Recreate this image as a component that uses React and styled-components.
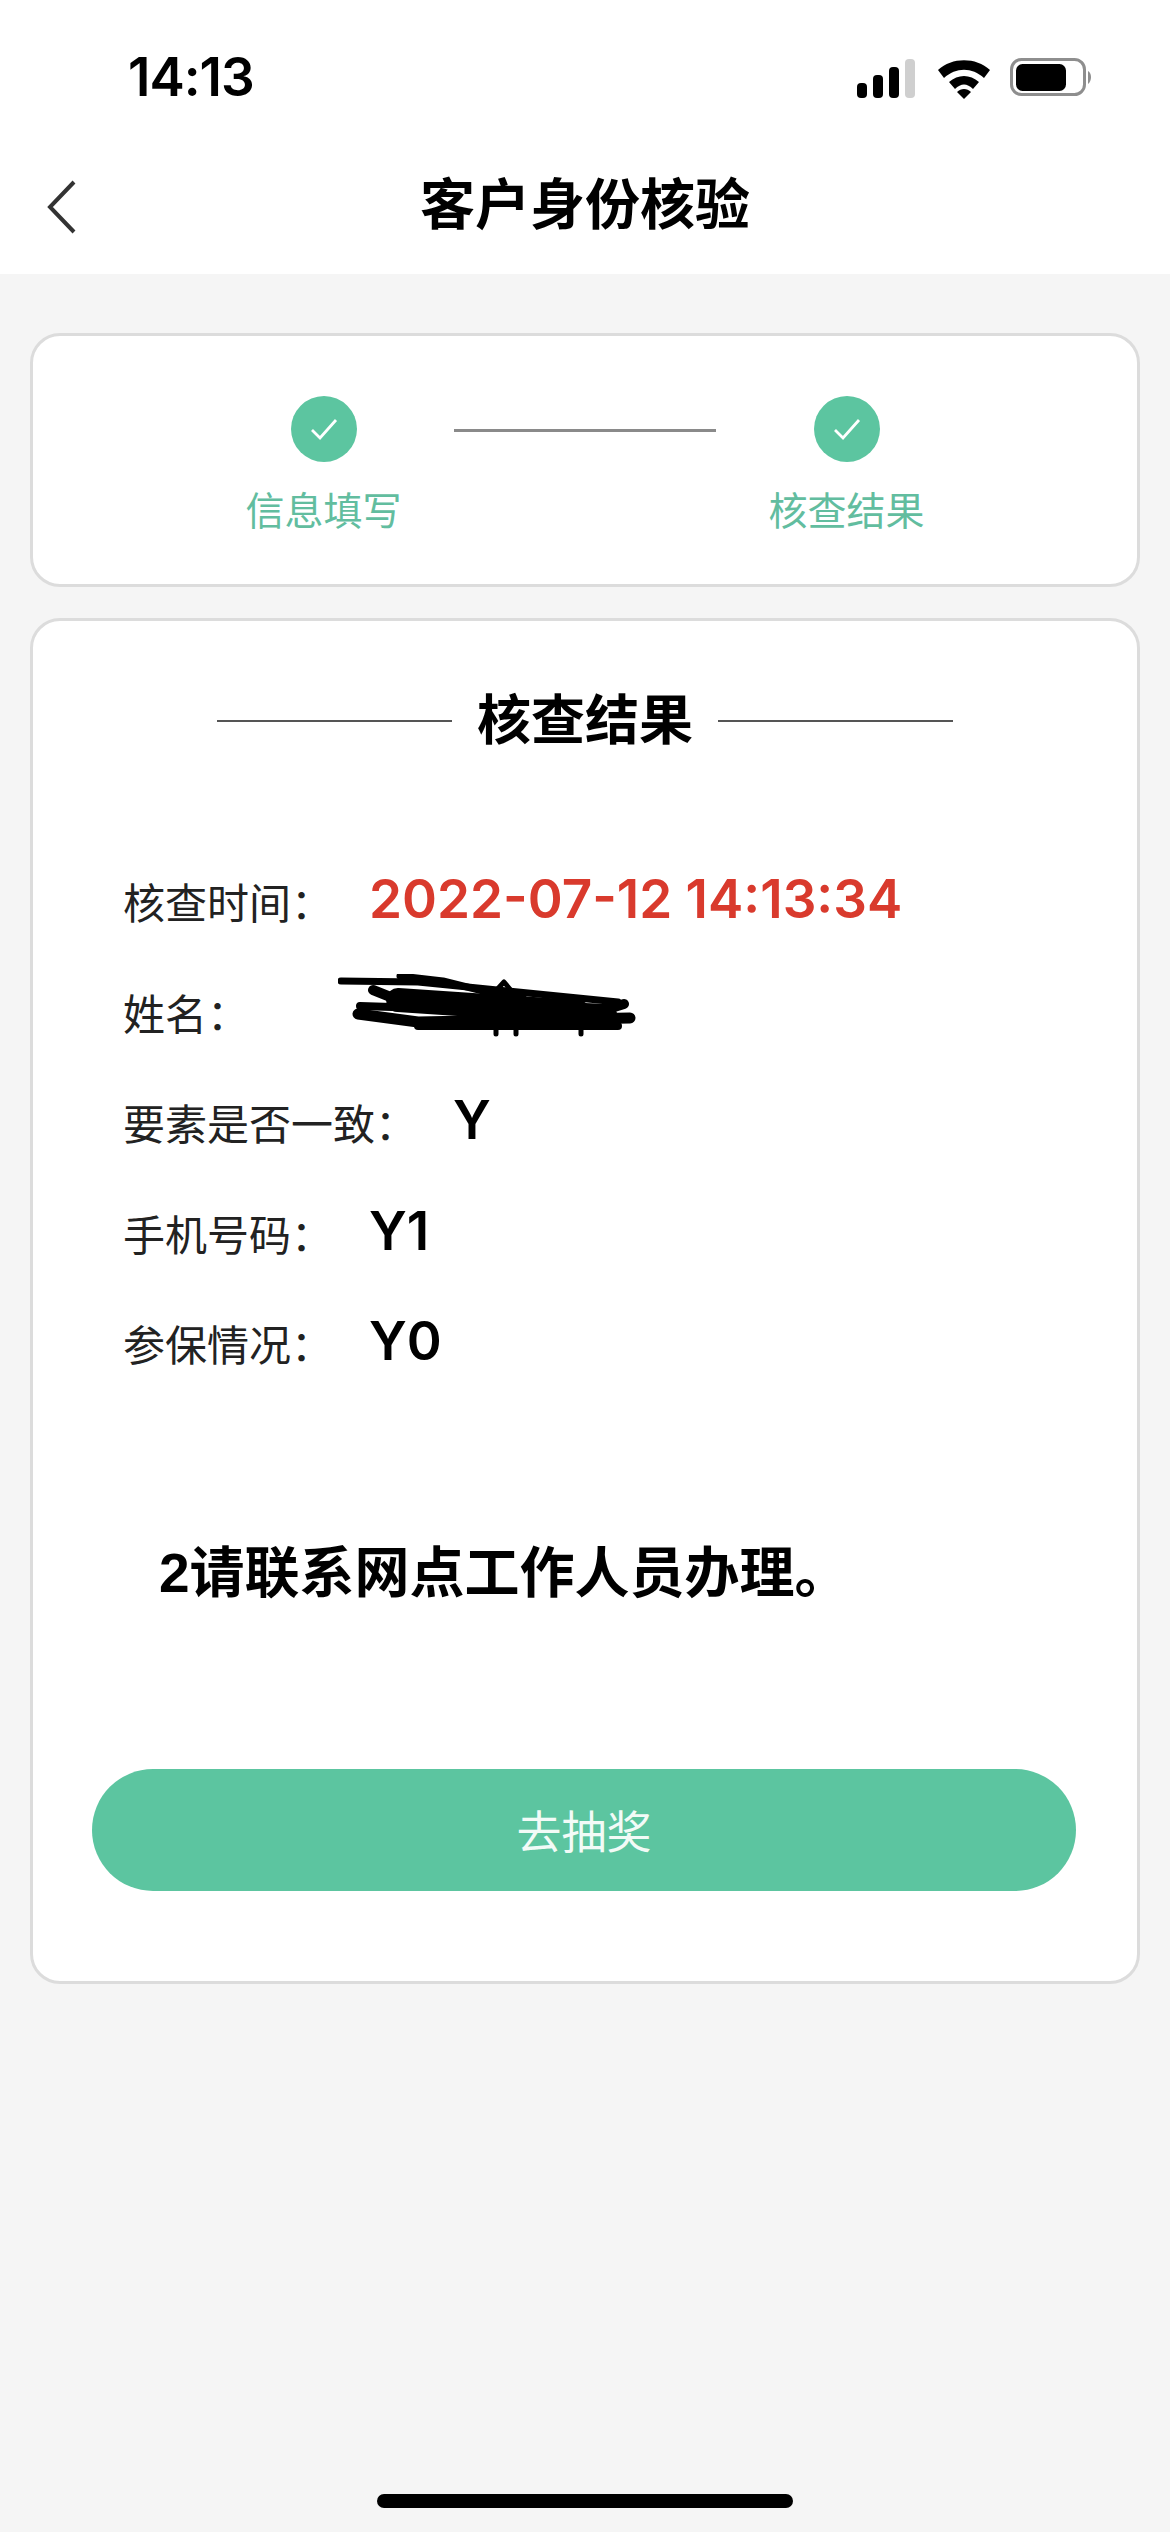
import React from 'react';
import styled, { createGlobalStyle } from 'styled-components';

const Global = createGlobalStyle`
  html, body { margin: 0; padding: 0; background: #f5f5f5; }
  * { box-sizing: border-box; }
`;
const FONT = `"Liberation Sans", "Noto Sans CJK SC", sans-serif`;
const GREEN = '#5cc5a0';

const Page = styled.div`
  width: 1170px; height: 2532px; background: #f5f5f5; font-family: ${FONT};
  color: #000; display: flex; flex-direction: column; overflow: hidden;
`;
const Top = styled.header`background: #fff; height: 274px; display: flex; flex-direction: column;`;
const StatusBar = styled.div`
  height: 150px; padding: 48px 76px 0 128px; display: flex; justify-content: space-between; align-items: flex-start;
`;
const Clock = styled.span`font-family: Inter, sans-serif; font-weight: 600; font-size: 53px; line-height: 58px; letter-spacing: -1px; color: #000;`;
const StatusIcons = styled.svg`width: 240px; height: 50px; display: block; margin-top: 6px;`;
const NavBar = styled.div`flex: 1; position: relative; display: flex; align-items: center; justify-content: center; padding-bottom: 14px;`;
const BackIcon = styled.svg`position: absolute; left: 47px; top: 29px; width: 36px; height: 56px;`;
const Title = styled.h1`margin: 0; font-size: 55px; font-weight: 700; line-height: 72px; color: #000;`;

const Main = styled.main`padding: 59px 30px 0; display: flex; flex-direction: column; gap: 31px;`;
const Card = styled.section`background: #fff; border: 3px solid #dcdcdc; border-radius: 30px;`;
const StepsCard = styled(Card)`height: 254px; padding-top: 60px; display: flex; justify-content: center;`;
const Step = styled.div`width: 261px; display: flex; flex-direction: column; align-items: center; gap: 26px;`;
const StepDot = styled.div`width: 66px; height: 66px; border-radius: 50%; background: ${GREEN}; display: flex; align-items: center; justify-content: center;`;
const StepLabel = styled.span`font-size: 39px; line-height: 48px; color: #62bd9f; white-space: nowrap;`;
const StepLine = styled.div`width: 262px; height: 3px; background: #8a8a8a; margin: 33px 0 0;`;

const ResultCard = styled(Card)`height: 1366px; padding: 0 59px; display: flex; flex-direction: column;`;
const SectionHead = styled.div`display: flex; align-items: center; justify-content: center; gap: 25px; margin-top: 64px; height: 72px;`;
const HeadRule = styled.div`width: 235px; height: 2px; background: #555;`;
const HeadText = styled.h2`margin: 0; font-size: 54px; font-weight: 700; line-height: 72px; color: #000;`;
const Rows = styled.div`margin-top: 87px; padding-left: 31px; display: flex; flex-direction: column;`;
const Row = styled.div`height: 110.5px; display: flex; align-items: center;`;
const Label = styled.span`font-size: 42px; line-height: 60px; color: #222; margin-top: 12px; white-space: nowrap;`;
const Value = styled.span`
  font-family: Inter, "Noto Sans CJK SC", sans-serif; font-weight: 600;
  font-size: 53px; line-height: 60px; margin-left: 36px;
  color: ${p => (p.$red ? '#d93a2d' : '#000')}; white-space: nowrap;
`;
const Scribble = styled.svg`width: 300px; height: 70px; margin: 0 0 2px 89px; flex: none;`;
const Notice = styled.p`margin: 140px 0 0 67px; font-size: 55px; line-height: 72px; font-weight: 700; color: #000;`;
const Action = styled.button`
  margin: 160px 0 0 0; height: 122px; width: 984px; border: 0; border-radius: 61px; background: ${GREEN};
  color: #f2fbf7; font: 400 45px ${FONT};
`;
const HomeBar = styled.div`width: 416px; height: 14px; border-radius: 7px; background: #000; margin: auto auto 24px;`;

const Check = () => (
  <svg width="30" height="24" viewBox="0 0 30 24">
    <path d="M3 13 L11 21 L27 3" fill="none" stroke="#fff" strokeWidth="2.8" />
  </svg>
);

const Scrib = () => (
  <Scribble viewBox="0 0 300 70">
    <g fill="none" stroke="#000" strokeLinecap="round" strokeLinejoin="round">
      <path d="M3 7 L80 8 L180 18 L280 28" strokeWidth="7" />
      <path d="M62 2 L105 7 L145 17 L185 24" strokeWidth="7" />
      <path d="M35 16 L60 26 L270 35 L286 30" strokeWidth="10" />
      <path d="M22 32 L275 40" strokeWidth="8" />
      <path d="M20 40 L80 48 L292 44" strokeWidth="11" />
      <path d="M80 52 L280 52" strokeWidth="8" />
      <path d="M60 26 L240 38" strokeWidth="24" />
      <path d="M155 20 L166 8 L176 20" strokeWidth="5" />
      <path d="M158 50 L158 60 M178 50 L178 60 M243 50 L243 60" strokeWidth="5" />
    </g>
  </Scribble>
);

export default function App() {
  return (
    <Page>
      <Global />
      <Top>
        <StatusBar>
          <Clock>14:13</Clock>
          <StatusIcons viewBox="0 0 240 50">
            <g fill="#000">
              <rect x="3" y="29" width="10" height="15" rx="4" />
              <rect x="19" y="21" width="10" height="23" rx="4" />
              <rect x="35" y="13" width="10" height="31" rx="4" />
            </g>
            <rect x="51" y="5" width="10" height="39" rx="4" fill="#cfcfcf" />
            <path d="M84 16 C98 3 122 3 136 16 L130 24 C118 13 102 13 90 24 Z" fill="#000" />
            <path d="M95 28 C104 20 116 20 125 28 L119 35 C113 29 107 29 101 35 Z" fill="#000" />
            <path d="M103 38 C107 34 113 34 117 38 L110 45 Z" fill="#000" />
            <rect x="157.5" y="5.5" width="73" height="35" rx="10" fill="none" stroke="#8e8e8e" strokeWidth="3" />
            <rect x="162" y="10" width="50" height="27" rx="6.5" fill="#000" />
            <path d="M234 17 C238 19 238 27 234 30 Z" fill="#8e8e8e" />
          </StatusIcons>
        </StatusBar>
        <NavBar>
          <BackIcon viewBox="0 0 36 56">
            <path d="M27 3 L3 28 L27 53" fill="none" stroke="#333" strokeWidth="4" />
          </BackIcon>
          <Title>客户身份核验</Title>
        </NavBar>
      </Top>
      <Main>
        <StepsCard>
          <Step><StepDot><Check /></StepDot><StepLabel>信息填写</StepLabel></Step>
          <StepLine />
          <Step><StepDot><Check /></StepDot><StepLabel>核查结果</StepLabel></Step>
        </StepsCard>
        <ResultCard>
          <SectionHead>
            <HeadRule />
            <HeadText>核查结果</HeadText>
            <HeadRule />
          </SectionHead>
          <Rows>
            <Row><Label>核查时间：</Label><Value $red>2022-07-12 14:13:34</Value></Row>
            <Row><Label>姓名：</Label><Scrib /></Row>
            <Row><Label>要素是否一致：</Label><Value>Y</Value></Row>
            <Row><Label>手机号码：</Label><Value>Y1</Value></Row>
            <Row><Label>参保情况：</Label><Value>Y0</Value></Row>
          </Rows>
          <Notice>2请联系网点工作人员办理。</Notice>
          <Action>去抽奖</Action>
        </ResultCard>
      </Main>
      <HomeBar />
    </Page>
  );
}
